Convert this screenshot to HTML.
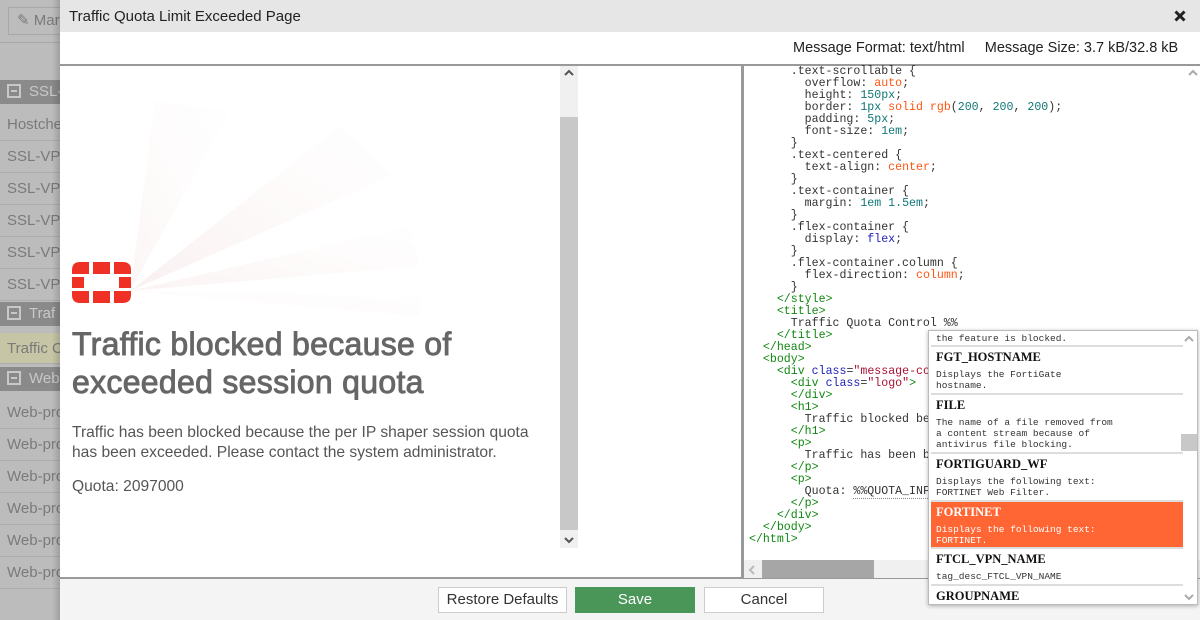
<!DOCTYPE html>
<html><head><meta charset="utf-8"><style>
*{margin:0;padding:0;box-sizing:border-box}
body{width:1200px;height:620px;overflow:hidden;position:relative;font-family:"Liberation Sans",sans-serif;background:#bcbcbc}
.abs{position:absolute}
.side{left:0;width:60px;color:#7a7a7a;font-size:15px;white-space:nowrap;overflow:hidden}
.row{position:absolute;left:0;width:60px;height:32px;line-height:32px;padding-left:7px;border-bottom:1px solid #adadad;overflow:hidden}
.sec{position:absolute;left:0;width:60px;height:24px;line-height:24px;background:#8a8a8a;color:#c8c8c8;padding-left:7px;overflow:hidden}
.sec b{display:inline-block;width:14px;height:14px;border:2px solid #c8c8c8;vertical-align:-2px;margin-right:8px;position:relative}
.sec b:after{content:"";position:absolute;left:2px;right:2px;top:4px;height:2px;background:#c8c8c8}
.code{position:absolute;left:749px;top:66px;font-family:"Liberation Mono",monospace;font-size:11.6px;line-height:12px;white-space:pre;color:#333}
.g{color:#118811}.o{color:#ff5511}.t{color:#117777}.b{color:#2222bb}.r{color:#aa1133}
.dd{left:928px;top:330px;width:270px;height:275px;background:#fff;border:1px solid #bbb;box-shadow:0 1px 4px rgba(0,0,0,.3);overflow:hidden;font-family:"Liberation Mono",monospace}
.it{position:absolute;left:2px;width:252px;padding-left:5px;border-bottom:2px solid #ddd}
.ti{font-family:"Liberation Serif",serif;font-weight:bold;font-size:12.5px;color:#111}
.de{font-size:9.5px;line-height:11px;color:#333}
.btn{position:absolute;top:587px;height:26px;border:1px solid #ccc;background:#fff;font-size:15px;text-align:center;line-height:24px;color:#333}
</style></head><body>
<div class="abs" style="left:8px;top:7px;width:60px;height:28px;border:1px solid #a8a8a8;color:#7a7a7a;font-size:15px;line-height:26px;padding-left:8px;white-space:nowrap">✎ Mar</div>
<div class="abs" style="left:0;top:42px;width:60px;height:1px;background:#a8a8a8"></div>
<div class="side abs" style="top:0;height:620px">
<div class="sec" style="top:80px"><b></b>SSL-</div>
<div class="row" style="top:109px">Hostche</div>
<div class="row" style="top:141px">SSL-VPN</div>
<div class="row" style="top:173px">SSL-VPN</div>
<div class="row" style="top:205px">SSL-VPN</div>
<div class="row" style="top:237px">SSL-VPN</div>
<div class="row" style="top:269px">SSL-VPN</div>
<div class="sec" style="top:302px"><b></b>Traf</div>
<div class="row" style="top:333px;background:#c6c6a6;height:31px">Traffic C</div>
<div class="sec" style="top:367px"><b></b>Web</div>
<div class="row" style="top:397px">Web-pro</div>
<div class="row" style="top:429px">Web-pro</div>
<div class="row" style="top:461px">Web-pro</div>
<div class="row" style="top:493px">Web-pro</div>
<div class="row" style="top:525px">Web-pro</div>
<div class="row" style="top:557px">Web-pro</div>
</div>
<div class="abs" style="left:52px;top:0;width:8px;height:620px;background:linear-gradient(90deg,rgba(0,0,0,0),rgba(0,0,0,.15))"></div>
<div class="abs" style="left:60px;top:0;width:1140px;height:620px;background:#fff">
<div class="abs" style="left:0;top:0;width:1140px;height:32px;background:#e6e6e6;font-size:15px;line-height:33px;padding-left:9px;color:#222">Traffic Quota Limit Exceeded Page</div>
<svg class="abs" style="left:1114px;top:10px" width="12" height="12"><path d="M1.5,1.5 L10.5,10.5 M10.5,1.5 L1.5,10.5" stroke="#222" stroke-width="3"/></svg>
<div class="abs" style="left:733px;top:40px;font-size:14.5px;color:#222;white-space:nowrap">Message Format: text/html &nbsp;&nbsp;&nbsp; Message Size: 3.7 kB/32.8 kB</div>
<div class="abs" style="left:0;top:64px;width:1140px;height:2px;background:#999"></div>
<div class="abs" style="left:0;top:577px;width:1140px;height:43px;background:#f4f4f4;border-top:2px solid #999"></div>
</div>
<svg class="abs" style="left:60px;top:66px" width="500" height="440">
<defs><linearGradient id="f" x1="0" y1="1" x2="1" y2="0"><stop offset="0" stop-color="#f3dede" stop-opacity=".8"/><stop offset="1" stop-color="#fbf0f0" stop-opacity=".1"/></linearGradient></defs>
<polygon points="70,225 95,35 170,45" fill="url(#f)" opacity=".35"/>
<polygon points="70,225 280,60 330,110" fill="url(#f)" opacity=".55"/>
<polygon points="70,225 350,160 360,200" fill="url(#f)" opacity=".45"/>
<polygon points="70,225 360,230 360,250" fill="url(#f)" opacity=".3"/>
</svg>
<svg class="abs" style="left:72px;top:262px" width="59" height="41" fill="#ee3124">
<path d="M0,8 Q0,0 8,0 H17 V12 H0Z"/><rect x="21" y="0" width="17" height="12"/><path d="M42,0 H51 Q59,0 59,8 V12 H42Z"/>
<rect x="0" y="15" width="12" height="11"/><rect x="47" y="15" width="12" height="11"/>
<path d="M0,29 H17 V41 H8 Q0,41 0,33Z"/><rect x="21" y="29" width="17" height="12"/><path d="M42,29 H59 V33 Q59,41 51,41 H42Z"/>
</svg>
<div class="abs" style="left:72px;top:325px;font-size:32px;line-height:38px;color:#666;-webkit-text-stroke:.9px #666;letter-spacing:.3px;white-space:nowrap">Traffic blocked because of<br>exceeded session quota</div>
<div class="abs" style="left:72px;top:423px;font-size:15.6px;line-height:19.5px;color:#555;white-space:nowrap">Traffic has been blocked because the per IP shaper session quota<br>has been exceeded. Please contact the system administrator.</div>
<div class="abs" style="left:72px;top:478px;font-size:15.6px;color:#555">Quota: 2097000</div>
<div class="abs" style="left:560px;top:66px;width:18px;height:482px;background:#f0f0f0"></div>
<div class="abs" style="left:560px;top:117px;width:18px;height:413px;background:#c8c8c8"></div>
<svg class="abs" style="left:564px;top:69px" width="10" height="8"><path d="M1,6 L5,2 L9,6" stroke="#555" stroke-width="2" fill="none"/></svg>
<svg class="abs" style="left:564px;top:536px" width="10" height="8"><path d="M1,2 L5,6 L9,2" stroke="#555" stroke-width="2" fill="none"/></svg>
<div class="abs" style="left:741px;top:66px;width:3px;height:512px;background:#999"></div>
<div class="code">      .text-scrollable {
        overflow: <span class="o">auto</span>;
        height: <span class="t">150px</span>;
        border: <span class="t">1px</span> <span class="o">solid rgb</span>(<span class="t">200</span>, <span class="t">200</span>, <span class="t">200</span>);
        padding: <span class="t">5px</span>;
        font-size: <span class="t">1em</span>;
      }
      .text-centered {
        text-align: <span class="o">center</span>;
      }
      .text-container {
        margin: <span class="t">1em 1.5em</span>;
      }
      .flex-container {
        display: <span class="b">flex</span>;
      }
      .flex-container.column {
        flex-direction: <span class="o">column</span>;
      }
    <span class="g">&lt;/style&gt;</span>
    <span class="g">&lt;title&gt;</span>
      Traffic Quota Control %%
    <span class="g">&lt;/title&gt;</span>
  <span class="g">&lt;/head&gt;</span>
  <span class="g">&lt;body&gt;</span>
    <span class="g">&lt;div</span> <span class="b">class</span>=<span class="r">"message-co</span>
      <span class="g">&lt;div</span> <span class="b">class</span>=<span class="r">"logo"</span><span class="g">&gt;</span>
      <span class="g">&lt;/div&gt;</span>
      <span class="g">&lt;h1&gt;</span>
        Traffic blocked be
      <span class="g">&lt;/h1&gt;</span>
      <span class="g">&lt;p&gt;</span>
        Traffic has been b
      <span class="g">&lt;/p&gt;</span>
      <span class="g">&lt;p&gt;</span>
        Quota: <span style="border-bottom:1px dotted #888">%%QUOTA_INF</span>
      <span class="g">&lt;/p&gt;</span>
    <span class="g">&lt;/div&gt;</span>
  <span class="g">&lt;/body&gt;</span>
<span class="g">&lt;/html&gt;</span></div>
<div class="abs" style="left:1185px;top:66px;width:15px;height:494px;background:#fff"></div>
<svg class="abs" style="left:1188px;top:69px" width="10" height="8"><path d="M1,6 L5,2 L9,6" stroke="#aaa" stroke-width="2" fill="none"/></svg>
<div class="abs" style="left:744px;top:560px;width:456px;height:18px;background:#f0f0f0"></div>
<div class="abs" style="left:762px;top:560px;width:112px;height:18px;background:#a6a6a6"></div>
<svg class="abs" style="left:748px;top:565px" width="8" height="10"><path d="M6,1 L2,5 L6,9" stroke="#bbb" stroke-width="2" fill="none"/></svg>
<div class="abs dd">
<div class="it" style="top:0;height:16px"><div class="de" style="margin-top:2px">the feature is blocked.</div></div>
<div class="it" style="top:16px;height:48px"><div class="ti" style="margin-top:3px">FGT_HOSTNAME</div><div class="de" style="margin-top:4px">Displays the FortiGate<br>hostname.</div></div>
<div class="it" style="top:64px;height:59px"><div class="ti" style="margin-top:3px">FILE</div><div class="de" style="margin-top:4px">The name of a file removed from<br>a content stream because of<br>antivirus file blocking.</div></div>
<div class="it" style="top:123px;height:48px"><div class="ti" style="margin-top:3px">FORTIGUARD_WF</div><div class="de" style="margin-top:4px">Displays the following text:<br>FORTINET Web Filter.</div></div>
<div class="it" style="top:171px;height:47px;background:#ff6633;border-bottom-color:#ddd"><div class="ti" style="margin-top:3px;color:#fff">FORTINET</div><div class="de" style="margin-top:4px;color:#fff">Displays the following text:<br>FORTINET.</div></div>
<div class="it" style="top:218px;height:37px"><div class="ti" style="margin-top:3px">FTCL_VPN_NAME</div><div class="de" style="margin-top:4px">tag_desc_FTCL_VPN_NAME</div></div>
<div class="it" style="top:255px;height:20px;border:none"><div class="ti" style="margin-top:3px">GROUPNAME</div></div>
<div class="abs" style="left:252px;top:103px;width:17px;height:17px;background:#c8c8c8"></div>
<svg class="abs" style="left:255px;top:4px" width="10" height="8"><path d="M1,6 L5,2 L9,6" stroke="#aaa" stroke-width="2" fill="none"/></svg>
<svg class="abs" style="left:255px;top:262px" width="10" height="8"><path d="M1,2 L5,6 L9,2" stroke="#aaa" stroke-width="2" fill="none"/></svg>
</div>
<div class="btn" style="left:438px;width:129px">Restore Defaults</div>
<div class="btn" style="left:575px;width:120px;background:#4a9558;border-color:#4a9558;color:#fff">Save</div>
<div class="btn" style="left:704px;width:120px">Cancel</div>
</body></html>
